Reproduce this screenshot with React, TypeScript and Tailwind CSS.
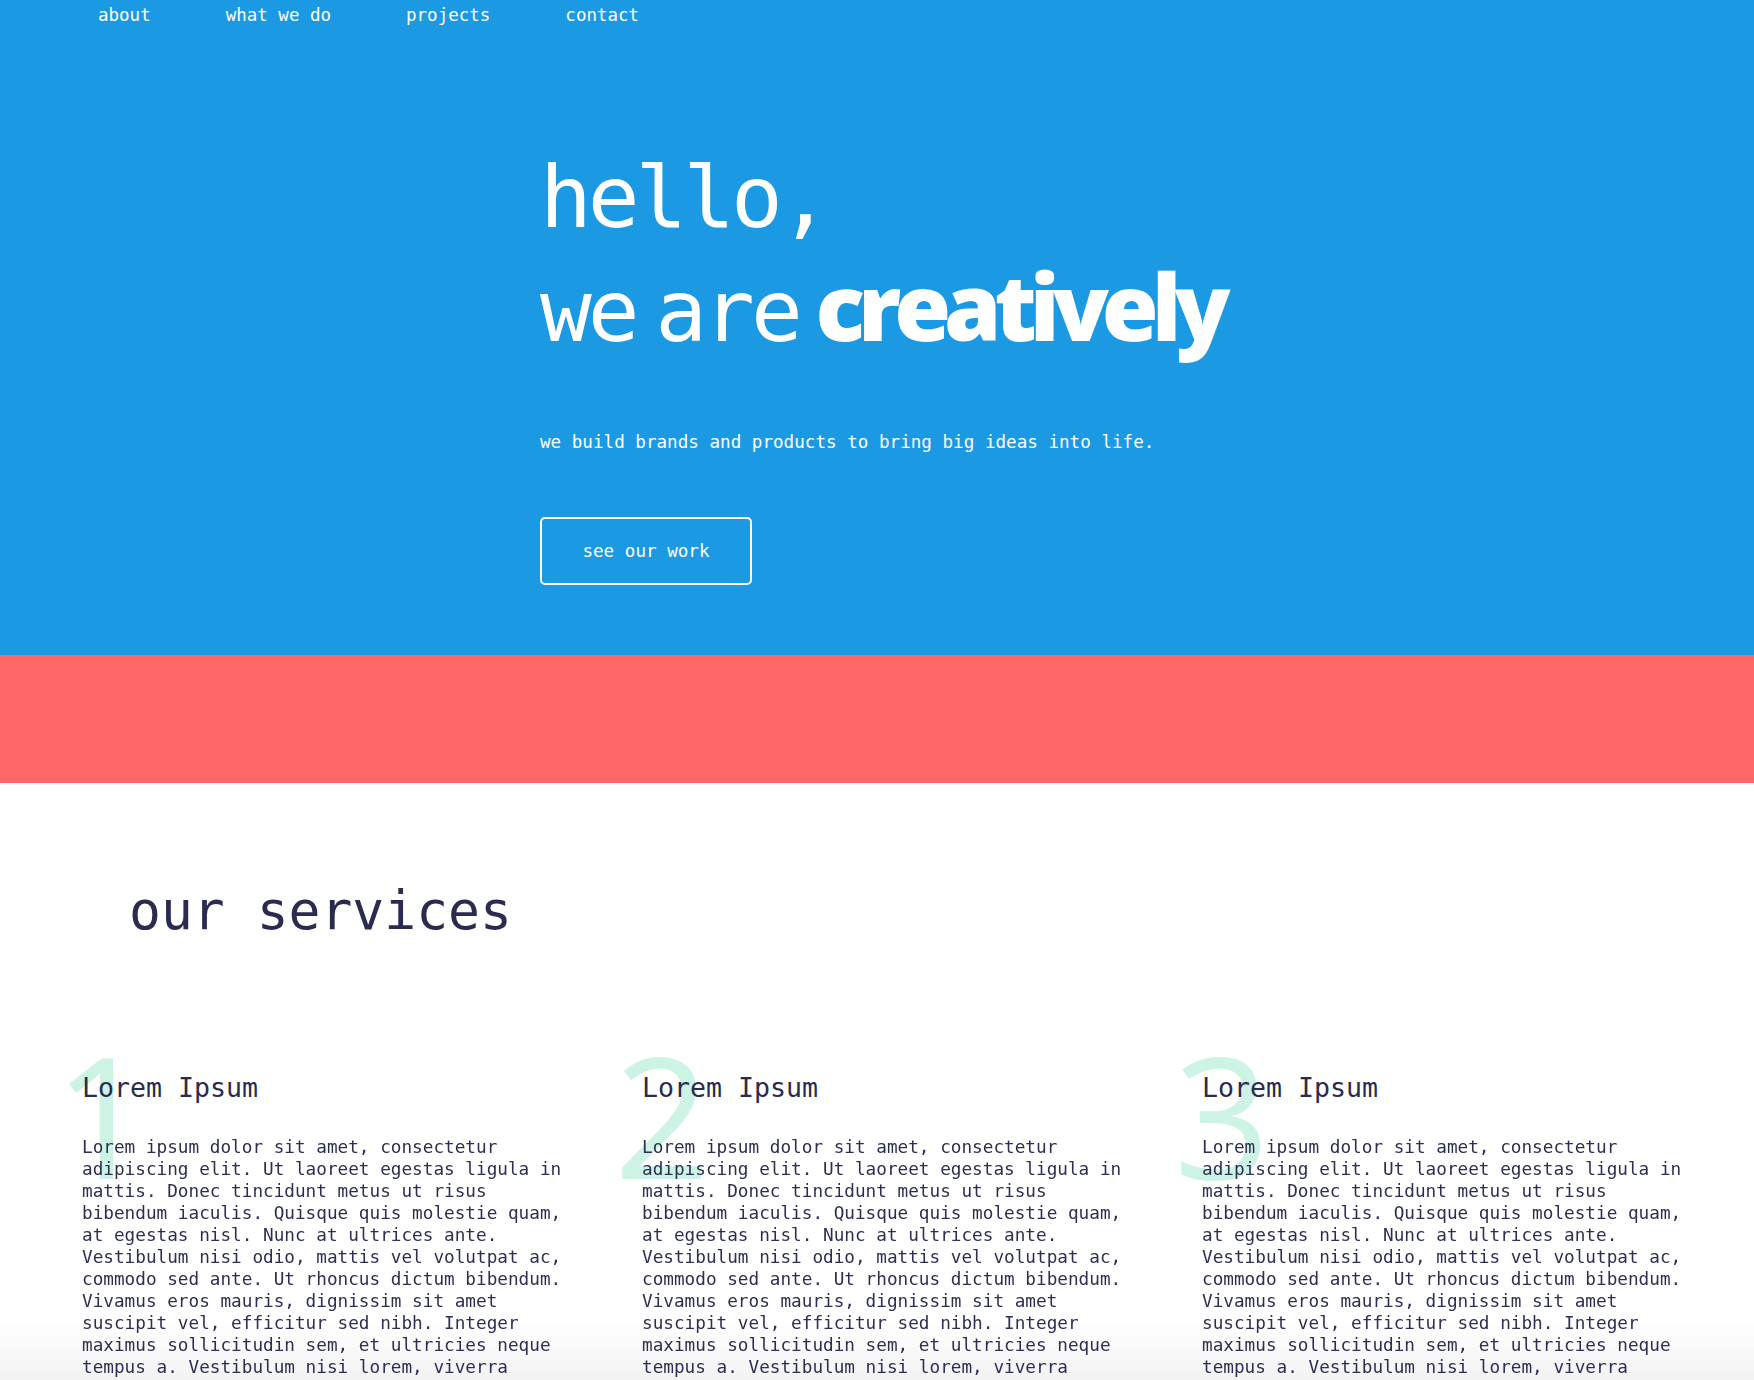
import React from "react";

const lorem =
  "Lorem ipsum dolor sit amet, consectetur adipiscing elit. Ut laoreet egestas ligula in mattis. Donec tincidunt metus ut risus bibendum iaculis. Quisque quis molestie quam, at egestas nisl. Nunc at ultrices ante. Vestibulum nisi odio, mattis vel volutpat ac, commodo sed ante. Ut rhoncus dictum bibendum. Vivamus eros mauris, dignissim sit amet suscipit vel, efficitur sed nibh. Integer maximus sollicitudin sem, et ultricies neque tempus a. Vestibulum nisi lorem, viverra pretium tincidunt at, pretium non nibh.";

const services = [
  { num: "1", title: "Lorem Ipsum", text: lorem },
  { num: "2", title: "Lorem Ipsum", text: lorem },
  { num: "3", title: "Lorem Ipsum", text: lorem },
];

const navItems = ["about", "what we do", "projects", "contact"];

const App: React.FC = () => {
  return (
    <div className="min-h-screen bg-white font-['DejaVu_Sans_Mono',monospace] overflow-hidden">
      {/* hero */}
      <header className="bg-[#1b99e3] text-white pb-[70px]">
        <nav className="flex gap-[75px] pl-[98px] h-[32px] items-center text-[17.5px]">
          {navItems.map((item) => (
            <a key={item} href="#" className="leading-none">
              {item}
            </a>
          ))}
        </nav>
        <div className="pl-[540px] pt-[108px]">
          <h1 className="text-[86px] leading-[114px] tracking-[-4px] font-normal">
            hello,
            <br />
            we<span className="tracking-[-32px]"> </span>are
            <span className="tracking-[-35px]"> </span>
            <span className="font-['Open_Sans',sans-serif] font-extrabold font-stretch-normal tracking-[-7px] text-[92px] leading-[80px]">
              creatively
            </span>
          </h1>
          <p className="mt-[60px] text-[17.6px] leading-[28px]">
            we build brands and products to bring big ideas into life.
          </p>
          <button className="mt-[61px] w-[212px] h-[68px] border-2 border-white rounded-[5px] text-[17.6px] text-white">
            see our work
          </button>
        </div>
      </header>

      <div className="bg-[#fe6868] h-[128px]"></div>

      {/* services */}
      <section className="text-[#2a2b4f] pb-[80px]">
        <h2 className="pl-[129px] pt-[96px] text-[53px] leading-[64px]">
          our services
        </h2>
        <div className="flex gap-[67px] pl-[82px] mt-[127px]">
          {services.map((s) => (
            <div key={s.num} className="relative w-[493px]">
              <span className="absolute -top-[41px] -left-[28px] z-0 font-['Open_Sans',sans-serif] text-[168px] leading-[170px] text-[#cdf3e4] select-none">
                {s.num}
              </span>
              <h3 className="relative z-10 text-[26.6px] leading-[36px]">
                {s.title}
              </h3>
              <p className="relative z-10 mt-[30px] text-[17.7px] leading-[22px] text-[#2d2f52]">
                {s.text}
              </p>
            </div>
          ))}
        </div>
      </section>

      <div className="fixed bottom-0 left-0 w-full h-[60px] bg-gradient-to-b from-transparent to-black/5 pointer-events-none"></div>
    </div>
  );
};

export default App;
